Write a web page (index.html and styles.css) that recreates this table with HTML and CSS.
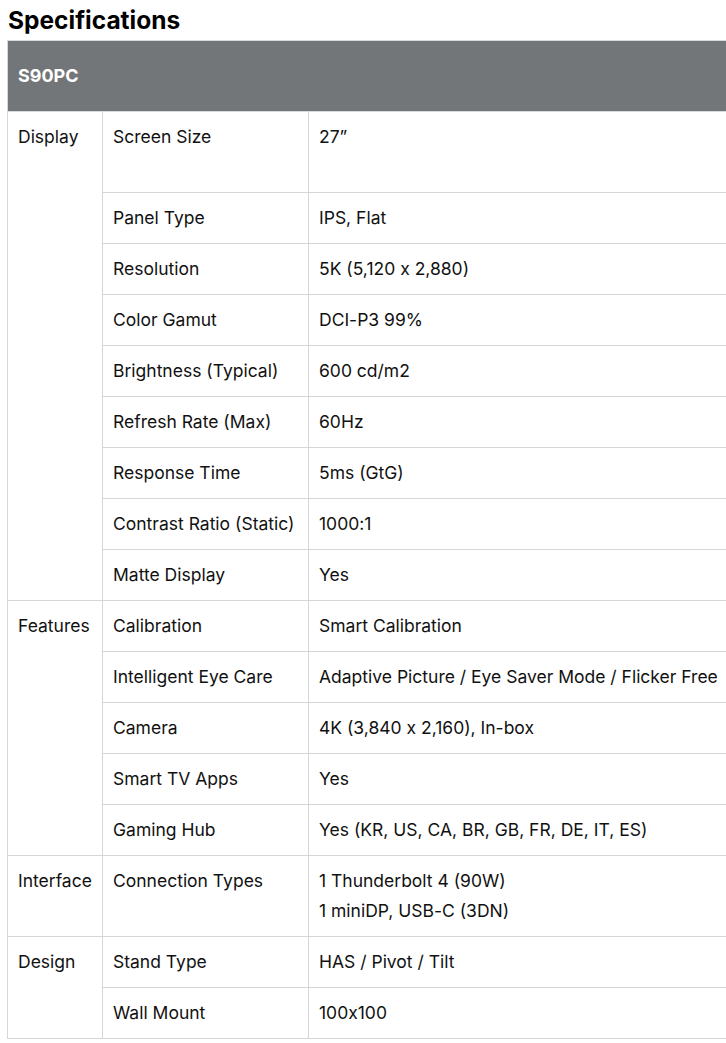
FILE: index.html
```html
<!DOCTYPE html>
<html lang="en">
<head>
<meta charset="utf-8">
<title>Specifications</title>
<link rel="stylesheet" href="styles.css">
</head>
<body>
<h2 class="title">Specifications</h2>
<table class="spec">
  <colgroup>
    <col class="c1">
    <col class="c2">
    <col class="c3">
  </colgroup>
  <thead>
    <tr><th colspan="3">S90PC</th></tr>
  </thead>
  <tbody>
    <tr><td rowspan="9">Display</td><td>Screen Size</td><td>27”<br>&nbsp;</td></tr>
    <tr><td>Panel Type</td><td>IPS, Flat</td></tr>
    <tr><td>Resolution</td><td>5K (5,120 x 2,880)</td></tr>
    <tr><td>Color Gamut</td><td>DCI-P3 99%</td></tr>
    <tr><td>Brightness (Typical)</td><td>600 cd/m2</td></tr>
    <tr><td>Refresh Rate (Max)</td><td>60Hz</td></tr>
    <tr><td>Response Time</td><td>5ms (GtG)</td></tr>
    <tr><td>Contrast Ratio (Static)</td><td>1000:1</td></tr>
    <tr><td>Matte Display</td><td>Yes</td></tr>
    <tr><td rowspan="5">Features</td><td>Calibration</td><td>Smart Calibration</td></tr>
    <tr><td>Intelligent Eye Care</td><td>Adaptive Picture / Eye Saver Mode / Flicker Free</td></tr>
    <tr><td>Camera</td><td>4K (3,840 x 2,160), In-box</td></tr>
    <tr><td>Smart TV Apps</td><td>Yes</td></tr>
    <tr><td>Gaming Hub</td><td>Yes (KR, US, CA, BR, GB, FR, DE, IT, ES)</td></tr>
    <tr><td>Interface</td><td>Connection Types</td><td>1 Thunderbolt 4 (90W)<br>1 miniDP, USB-C (3DN)</td></tr>
    <tr><td rowspan="2">Design</td><td>Stand Type</td><td>HAS / Pivot / Tilt</td></tr>
    <tr><td>Wall Mount</td><td>100x100</td></tr>
  </tbody>
</table>
</body>
</html>
```
FILE: styles.css
```css
html, body {
  margin: 0;
  padding: 0;
  background: #fff;
  overflow: hidden;
}
body {
  font-family: Inter, "Noto Sans", sans-serif;
  font-feature-settings: "calt" 0;
  color: #111;
  padding-left: 7px;
}
.title {
  margin: 0 0 0 1px;
  font-size: 24.5px;
  font-weight: 700;
  line-height: 40px;
  height: 40px;
  color: #000;
}
.spec {
  border-collapse: collapse;
  table-layout: fixed;
  width: 740px;
  font-size: 17.5px;
  line-height: 30px;
}
.c1 { width: 95px; }
.c2 { width: 206px; }
.spec th {
  background: #737679;
  color: #fff;
  text-align: left;
  font-weight: 700;
  font-size: 18px;
  height: 71px;
  padding: 0 10px;
  border: 1px solid #d9d9d9;
  box-sizing: border-box;
}
.spec td {
  border: 1px solid #d6d6d6;
  padding: 10px 10px;
  vertical-align: top;
  white-space: nowrap;
}
```
